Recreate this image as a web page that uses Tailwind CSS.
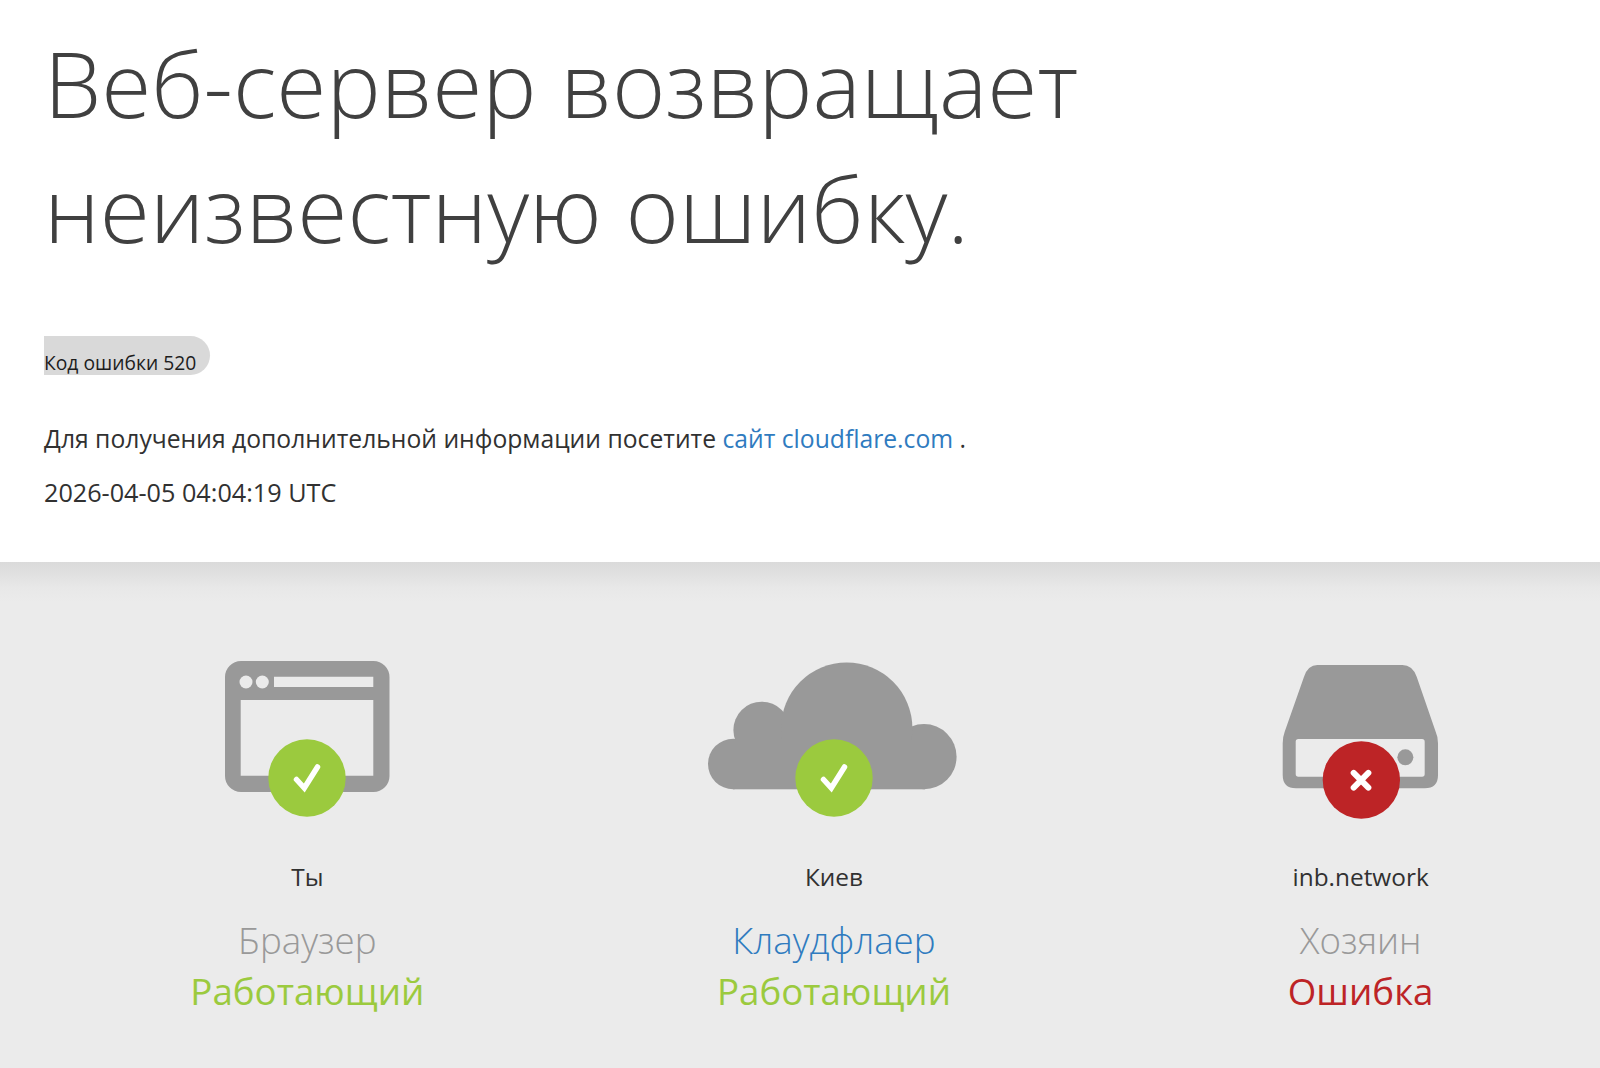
<!DOCTYPE html>
<html lang="ru">
<head>
    <title>Веб-сервер возвращает неизвестную ошибку</title>
    <meta charset="utf-8">
    <meta name="viewport" content="width=device-width, initial-scale=1">
    <script src="https://cdn.jsdelivr.net/npm/@tailwindcss/browser@4"></script>
</head>
<body class="bg-white overflow-hidden font-['Open_Sans',sans-serif] text-[#313131]">
    <!-- Header -->
    <div class="h-[562px] pl-[44px] pt-[21px]">
        <h1 class="w-[1200px] text-[91.2px] leading-[125px] font-light text-[#404040]">Веб-сервер возвращает неизвестную ошибку.</h1>
        <div class="mt-[65px] w-[166px] h-[39px] bg-[#d9d9d9] rounded-r-[20px] text-[19.3px] leading-[26px] pt-[14px] whitespace-nowrap text-[#1d1d1d]">Код ошибки 520</div>
        <p class="mt-[46px] text-[24.7px] leading-[36px]">Для получения дополнительной информации посетите <a href="#" class="text-[#2f7bbf]">сайт cloudflare.com</a> .</p>
        <p class="mt-[17px] text-[25.2px] leading-[36px]">2026-04-05 04:04:19 UTC</p>
    </div>

    <!-- Status -->
    <div class="h-[506px] bg-[linear-gradient(#dadada,#e8e8e8_26px,#ebebeb_40px)] pt-[98px] pl-[44px]">
        <div class="w-[1580px] grid grid-cols-3 text-center">
            <div class="flex flex-col items-center">
                <svg width="280" height="160" viewBox="0 0 280 160">
                    <path fill="#999" fill-rule="evenodd" d="M74 1H206.5A16 16 0 0 1 222.5 17V116A16 16 0 0 1 206.5 132H74A16 16 0 0 1 58 116V17A16 16 0 0 1 74 1ZM73.7 40V115.7H206.3V40ZM107 16.7V27H206.3V16.7Z"/>
                    <circle cx="79" cy="22" r="6.5" fill="#ebebeb"/>
                    <circle cx="95.3" cy="22" r="6.5" fill="#ebebeb"/>
                    <circle cx="140" cy="118" r="38.7" fill="#9bca3e"/>
                    <path d="M129.5 119.5L137.3 128L150.5 107" fill="none" stroke="#fff" stroke-width="5.5" stroke-linecap="round"/>
                </svg>
                <div class="mt-[40px] text-[24.4px] leading-[34px]">Ты</div>
                <div class="mt-[21px] text-[36.7px] leading-[50px] font-light text-[#999]">Браузер</div>
                <div class="mt-[1px] text-[36.7px] leading-[50px] text-[#9bca3e]">Работающий</div>
            </div>
            <div class="flex flex-col items-center">
                <svg width="280" height="160" viewBox="0 0 280 160">
                    <g fill="#999">
                        <circle cx="39.3" cy="104" r="25.3"/>
                        <circle cx="230" cy="96.7" r="32.6"/>
                        <circle cx="67.7" cy="70" r="28.3"/>
                        <circle cx="152.7" cy="68.3" r="65.7"/>
                        <rect x="39" y="80" width="192" height="49.3"/>
                    </g>
                    <circle cx="140" cy="118" r="38.7" fill="#9bca3e"/>
                    <path d="M129.5 119.5L137.3 128L150.5 107" fill="none" stroke="#fff" stroke-width="5.5" stroke-linecap="round"/>
                </svg>
                <div class="mt-[40px] text-[24.4px] leading-[34px]">Киев</div>
                <div class="mt-[21px] text-[36.7px] leading-[50px] font-light text-[#2f7bbf]">Клаудфлаер</div>
                <div class="mt-[1px] text-[36.7px] leading-[50px] text-[#9bca3e]">Работающий</div>
            </div>
            <div class="flex flex-col items-center">
                <svg width="280" height="160" viewBox="0 0 280 160">
                    <g transform="translate(39.7 -20) scale(0.3333)">
                        <path fill="#999" fill-rule="evenodd" d="M170 75H425Q455 75 468 110L525 275Q532 290 532 310V405Q532 445 492 445H106Q66 445 66 405V310Q66 290 72 275L130 110Q142 75 170 75ZM113 297Q105 297 105 305V402Q105 410 113 410H484Q492 410 492 402V305Q492 297 484 297Z"/>
                        <circle cx="434" cy="352" r="24" fill="#999"/>
                        <circle cx="302" cy="420" r="116" fill="#bd2426"/>
                        <path d="M279 399L323 443M323 399L279 443" stroke="#fff" stroke-width="18" stroke-linecap="round"/>
                    </g>
                </svg>
                <div class="mt-[40px] text-[24.4px] leading-[34px]">inb.network</div>
                <div class="mt-[21px] text-[36.7px] leading-[50px] font-light text-[#999]">Хозяин</div>
                <div class="mt-[1px] text-[36.7px] leading-[50px] text-[#bd2426]">Ошибка</div>
            </div>
        </div>
    </div>
</body>
</html>
